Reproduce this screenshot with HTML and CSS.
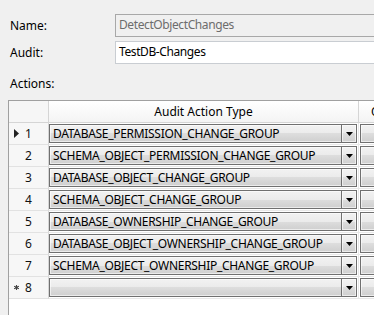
FILE: index.html
```html
<!DOCTYPE html>
<html>
<head>
<meta charset="utf-8">
<link rel="stylesheet" href="styles.css">
</head>
<body>
<div class="form">
  <div class="field"><span class="lbl">Name:</span><div class="box disabled">DetectObjectChanges</div></div>
  <div class="field"><span class="lbl">Audit:</span><div class="box">TestDB-Changes</div></div>
  <div class="actions-lbl">Actions:</div>
</div>
<div class="grid">
  <div class="hdr corner"></div>
  <div class="hdr">Audit Action Type</div>
  <div class="hdr col3">Object Class</div>

  <div class="rh"><span class="ind"><svg width="5" height="9" viewBox="0 0 5 9"><polygon points="0,0 5,4.5 0,9" fill="#222"/></svg></span><span class="num">1</span></div>
  <div class="cell"><div class="combo"><span class="ctext">DATABASE_PERMISSION_CHANGE_GROUP</span><span class="cbtn"><svg width="7" height="4" viewBox="0 0 7 4"><polygon points="0,0 7,0 3.5,4" fill="#000"/></svg></span></div></div>
  <div class="cell c3"><div class="combo"><span class="ctext"></span></div></div>

  <div class="rh"><span class="ind"></span><span class="num">2</span></div>
  <div class="cell"><div class="combo"><span class="ctext">SCHEMA_OBJECT_PERMISSION_CHANGE_GROUP</span><span class="cbtn"><svg width="7" height="4" viewBox="0 0 7 4"><polygon points="0,0 7,0 3.5,4" fill="#000"/></svg></span></div></div>
  <div class="cell c3"><div class="combo"><span class="ctext"></span></div></div>

  <div class="rh"><span class="ind"></span><span class="num">3</span></div>
  <div class="cell"><div class="combo"><span class="ctext">DATABASE_OBJECT_CHANGE_GROUP</span><span class="cbtn"><svg width="7" height="4" viewBox="0 0 7 4"><polygon points="0,0 7,0 3.5,4" fill="#000"/></svg></span></div></div>
  <div class="cell c3"><div class="combo"><span class="ctext"></span></div></div>

  <div class="rh"><span class="ind"></span><span class="num">4</span></div>
  <div class="cell"><div class="combo"><span class="ctext">SCHEMA_OBJECT_CHANGE_GROUP</span><span class="cbtn"><svg width="7" height="4" viewBox="0 0 7 4"><polygon points="0,0 7,0 3.5,4" fill="#000"/></svg></span></div></div>
  <div class="cell c3"><div class="combo"><span class="ctext"></span></div></div>

  <div class="rh"><span class="ind"></span><span class="num">5</span></div>
  <div class="cell"><div class="combo"><span class="ctext">DATABASE_OWNERSHIP_CHANGE_GROUP</span><span class="cbtn"><svg width="7" height="4" viewBox="0 0 7 4"><polygon points="0,0 7,0 3.5,4" fill="#000"/></svg></span></div></div>
  <div class="cell c3"><div class="combo"><span class="ctext"></span></div></div>

  <div class="rh"><span class="ind"></span><span class="num">6</span></div>
  <div class="cell"><div class="combo"><span class="ctext">DATABASE_OBJECT_OWNERSHIP_CHANGE_GROUP</span><span class="cbtn"><svg width="7" height="4" viewBox="0 0 7 4"><polygon points="0,0 7,0 3.5,4" fill="#000"/></svg></span></div></div>
  <div class="cell c3"><div class="combo"><span class="ctext"></span></div></div>

  <div class="rh"><span class="ind"></span><span class="num">7</span></div>
  <div class="cell"><div class="combo"><span class="ctext">SCHEMA_OBJECT_OWNERSHIP_CHANGE_GROUP</span><span class="cbtn"><svg width="7" height="4" viewBox="0 0 7 4"><polygon points="0,0 7,0 3.5,4" fill="#000"/></svg></span></div></div>
  <div class="cell c3"><div class="combo"><span class="ctext"></span></div></div>

  <div class="rh"><span class="ind"><svg width="5" height="5" viewBox="0 0 5 5"><path d="M2.5 0V5M0 1.2L5 3.8M0 3.8L5 1.2" stroke="#444" stroke-width="1.1"/><circle cx="2.5" cy="2.5" r="1.3" fill="#444"/></svg></span><span class="num">8</span></div>
  <div class="cell"><div class="combo"><span class="ctext"></span><span class="cbtn"><svg width="7" height="4" viewBox="0 0 7 4"><polygon points="0,0 7,0 3.5,4" fill="#000"/></svg></span></div></div>
  <div class="cell c3"><div class="combo"><span class="ctext"></span></div></div>
</div>
</body>
</html>
```
FILE: styles.css
```css
html, body {
  margin: 0;
  padding: 0;
  height: 100%;
  overflow: hidden;
}
body {
  background: #f0f0f0;
  font-family: "Noto Sans", "Open Sans", sans-serif;
  font-size: 12px;
  color: #000;
}
.form {
  padding: 14px 0 0 10px;
  display: flex;
  flex-direction: column;
  gap: 4px;
}
.field {
  display: flex;
  align-items: center;
  height: 23px;
}
.lbl {
  width: 105px;
  flex: none;
}
.box {
  flex: 1;
  height: 23px;
  box-sizing: border-box;
  margin-right: -20px;
  border: 1px solid #c9cdd2;
  background: #fff;
  padding-left: 3px;
  line-height: 20px;
  letter-spacing: -0.4px;
}
.box.disabled {
  background: #f0f0f0;
  border-color: #a8a8a8;
  color: #6d6d6d;
}
.actions-lbl {
  margin-top: 8px;
  line-height: 16px;
}
.grid {
  margin: 8px 0 0 8px;
  border-left: 1px solid #a0a0a0;
  border-top: 1px solid #a0a0a0;
  background: #fff;
  height: 260px;
  display: grid;
  grid-template-columns: 40px 310px 120px;
  grid-auto-rows: 22px;
  align-content: start;
  box-sizing: border-box;
}
.hdr {
  box-sizing: border-box;
  border-right: 1px solid #d5d5d5;
  border-bottom: 1px solid #d5d5d5;
  background: linear-gradient(#ffffff, #f4f4f4);
  display: flex;
  align-items: center;
  justify-content: center;
  white-space: nowrap;
  overflow: hidden;
}
.hdr.corner {
  background: #f6f6f6;
}
.hdr.col3 {
  justify-content: flex-start;
  padding-left: 12px;
}
.rh {
  box-sizing: border-box;
  border-right: 1px solid #d5d5d5;
  border-bottom: 1px solid #e2e2e2;
  background: #f7f7f7;
  display: grid;
  grid-template-columns: 1fr auto 1fr;
  align-items: center;
}
.ind {
  padding-left: 5px;
  display: flex;
  align-items: center;
}
.num {
  color: #111;
}
.cell {
  box-sizing: border-box;
  padding: 1px 1px 1px 0;
  border-right: 1px solid #e8e8e8;
  border-bottom: 1px solid #e8e8e8;
}
.cell.c3 {
  padding-left: 1px;
  border-right: none;
}
.combo {
  height: 19px;
  box-sizing: border-box;
  border: 1px solid #707070;
  background: linear-gradient(#f2f2f2, #ebebeb 50%, #dddddd 50%, #cfcfcf);
  box-shadow: inset 0 0 0 1px rgba(255,255,255,0.6);
  display: flex;
}
.ctext {
  flex: 1;
  padding-left: 3px;
  line-height: 17px;
  white-space: nowrap;
  overflow: hidden;
  letter-spacing: -0.3px;
}
.cbtn {
  width: 15px;
  box-sizing: border-box;
  border-left: 1px solid #707070;
  background: linear-gradient(#f2f2f2, #ebebeb 50%, #dddddd 50%, #cfcfcf);
  box-shadow: inset 0 0 0 1px rgba(255,255,255,0.6);
  display: flex;
  align-items: center;
  justify-content: center;
}
```
